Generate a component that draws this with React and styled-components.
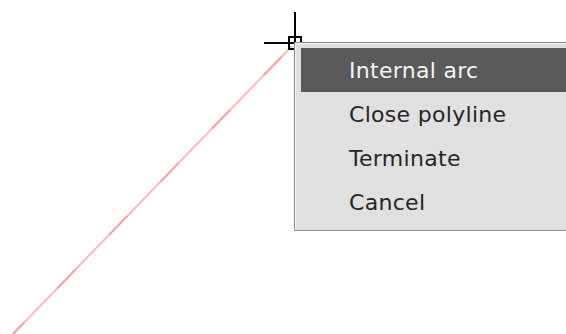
import React from 'react'
import styled, { createGlobalStyle } from 'styled-components'

const Global = createGlobalStyle`
html, body {
  margin: 0;
  padding: 0;
  background: #ffffff;
  overflow: hidden;
}
`

const Canvas = styled.div`
position: relative;
width: 566px;
height: 334px;
background: #ffffff;
overflow: hidden;
`

const Drawing = styled.svg`
display: block;
width: 566px;
height: 334px;
`

const Menu = styled.ul`
position: absolute;
left: 294px;
top: 42px;
width: 300px;
margin: 0;
padding: 5px 0 6px 6px;
list-style: none;
background: #e0e0e0;
border: 1px solid #8c8c8c;
box-shadow: inset 1px 1px 0 #f4f4f4;
font-family: "DejaVu Sans", "Liberation Sans", sans-serif;
font-size: 22px;
letter-spacing: 0.3px;
`

const Item = styled.li`
height: 44px;
display: flex;
align-items: center;
padding-left: 48px;
color: ${p => (p.$active ? '#f4f4f4' : '#262626')};
background: ${p => (p.$active ? '#5a5a5a' : 'transparent')};
`

const items = ['Internal arc', 'Close polyline', 'Terminate', 'Cancel']

export default function App() {
  return (
    <Canvas>
      <Global />
      <Drawing viewBox="0 0 566 334">
        <line x1="13" y1="334" x2="292" y2="46" stroke="#ffb4b4" strokeWidth="1.8" />
        <line x1="13" y1="334" x2="292" y2="46" stroke="#ff9c9c" strokeWidth="1.8" strokeDasharray="26 48" strokeDashoffset="10" />
        <line x1="295" y1="12" x2="295" y2="74" stroke="#000" strokeWidth="2" />
        <line x1="264" y1="43" x2="326" y2="43" stroke="#000" strokeWidth="2" />
        <rect x="289" y="37" width="12" height="12" fill="none" stroke="#000" strokeWidth="2" />
      </Drawing>
      <Menu>
        {items.map((t, i) => (
          <Item key={t} $active={i === 0}>{t}</Item>
        ))}
      </Menu>
    </Canvas>
  )
}
